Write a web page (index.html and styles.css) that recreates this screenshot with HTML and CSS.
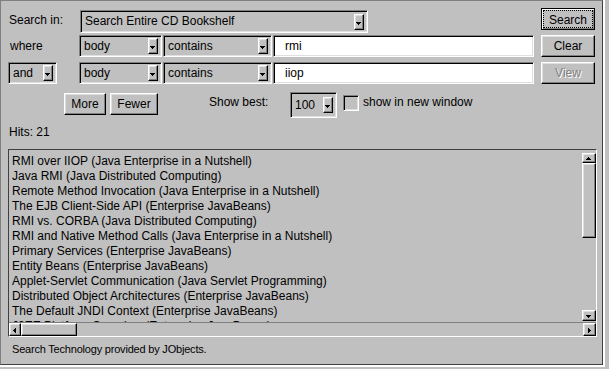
FILE: index.html
```html
<!DOCTYPE html>
<html lang="en">
<head>
  <meta charset="UTF-8">
  <meta name="viewport" content="width=device-width, initial-scale=1.0">
  <link rel="stylesheet" href="styles.css">
  <title>CD Bookshelf Search</title>
</head>
<body>

  <div class="applet">
    <div class="panel">

      <div class="row row-scope">
        <span class="lbl lbl-search">Search in:</span>
        <div class="choice choice-scope"><span class="choice-text">Search Entire CD Bookshelf</span><i class="drop"></i></div>
        <span class="spacer"></span>
        <button class="btn btn-default"><span class="focus">Search</span></button>
      </div>

      <div class="row row-where">
        <span class="lbl lbl-where">where</span>
        <div class="choice choice-field"><span class="choice-text">body</span><i class="drop"></i></div>
        <div class="choice choice-op"><span class="choice-text">contains</span><i class="drop"></i></div>
        <input class="field" type="text" value="rmi">
        <span class="spacer"></span>
        <button class="btn">Clear</button>
      </div>

      <div class="row row-and">
        <div class="choice choice-join"><span class="choice-text">and</span><i class="drop"></i></div>
        <div class="choice choice-field"><span class="choice-text">body</span><i class="drop"></i></div>
        <div class="choice choice-op"><span class="choice-text">contains</span><i class="drop"></i></div>
        <input class="field" type="text" value="iiop">
        <span class="spacer"></span>
        <button class="btn btn-off" disabled>View</button>
      </div>

      <div class="row row-more">
        <button class="btn btn-more">More</button>
        <button class="btn btn-fewer">Fewer</button>
        <span class="lbl lbl-best">Show best:</span>
        <div class="choice choice-best"><span class="choice-text">100</span><i class="drop"></i></div>
        <span class="check"></span>
        <span class="lbl lbl-window">show in new window</span>
      </div>

      <p class="hits">Hits: 21</p>

      <div class="results">
        <div class="results-top">
          <ul class="results-list">
            <li>RMI over IIOP (Java Enterprise in a Nutshell)</li>
            <li>Java RMI (Java Distributed Computing)</li>
            <li>Remote Method Invocation (Java Enterprise in a Nutshell)</li>
            <li>The EJB Client-Side API (Enterprise JavaBeans)</li>
            <li>RMI vs. CORBA (Java Distributed Computing)</li>
            <li>RMI and Native Method Calls (Java Enterprise in a Nutshell)</li>
            <li>Primary Services (Enterprise JavaBeans)</li>
            <li>Entity Beans (Enterprise JavaBeans)</li>
            <li>Applet-Servlet Communication (Java Servlet Programming)</li>
            <li>Distributed Object Architectures (Enterprise JavaBeans)</li>
            <li>The Default JNDI Context (Enterprise JavaBeans)</li>
            <li>J2EE Platform Overview (Enterprise JavaBeans)</li>
          </ul>
          <div class="vbar">
            <span class="sb-btn sb-up"></span>
            <span class="sb-thumb vthumb"></span>
            <span class="sb-track"></span>
            <span class="sb-btn sb-down"></span>
          </div>
        </div>
        <div class="hbar">
          <span class="sb-btn sb-left"></span>
          <span class="sb-thumb hthumb"></span>
          <span class="sb-track"></span>
          <span class="sb-btn sb-right"></span>
        </div>
      </div>

      <p class="credit">Search Technology provided by JObjects.</p>

    </div>
  </div>

</body>
</html>
```
FILE: styles.css
```css
*{
  margin: 0;
  padding: 0;
  box-sizing: border-box;
}
body{
  background: #c0c0c0;
  font-family: "Liberation Sans", Arial, sans-serif;
  font-size: 12px;
  color: #000;
}
.applet{
  width: 605px;
  height: 367px;
  border-right: 2px solid #fff;
  border-bottom: 2px solid #fff;
}
.panel{
  width: 603px;
  height: 365px;
  border: 1px solid;
  border-color: #808080 #404040 #404040 #808080;
}

/* form rows */
.row{
  display: flex;
  align-items: flex-start;
  padding: 0 7px;
}
.row-scope{
  margin-top: 7px;
  height: 26px;
}
.row-where{
  margin-top: 1px;
  height: 22px;
}
.row-and{
  margin-top: 5px;
  height: 22px;
}
.row-more{
  margin-top: 8px;
  height: 26px;
}
.spacer{
  flex: 1;
}
.lbl{
  line-height: 15px;
  white-space: nowrap;
}
.lbl-search{
  width: 72px;
  padding-left: 1px;
  margin-top: 5px;
}
.lbl-where{
  width: 71px;
  padding-left: 2px;
  margin-top: 4px;
}
.lbl-best{
  width: 81px;
  margin-left: 51px;
  margin-top: 3px;
}
.lbl-window{
  margin-left: 4px;
  margin-top: 3px;
}

/* sunken and raised bevels */
.choice, .field, .check{
  border: 1px solid;
  border-color: #808080 #fff #fff #808080;
  box-shadow: inset 1px 1px 0 #000, inset -1px -1px 0 #dfdfdf;
}
.btn, .drop, .sb-btn, .sb-thumb{
  border: 1px solid;
  border-color: #fff #000 #000 #fff;
  box-shadow: inset -1px -1px 0 #808080, inset 1px 1px 0 #dfdfdf;
  background: #c0c0c0;
}

/* choice boxes */
.choice{
  display: flex;
  align-items: center;
  height: 22px;
  padding: 2px 3px 2px 4px;
  background: #c0c0c0;
}
.choice-text{
  flex: 1;
  line-height: 15px;
  white-space: nowrap;
}
.choice-scope{
  width: 288px;
  height: 23px;
  margin-top: 2px;
}
.choice-field{
  width: 83px;
}
.choice-op{
  width: 109px;
  margin-left: 1px;
}
.choice-join{
  width: 49px;
  margin-right: 22px;
}
.choice-best{
  width: 47px;
  height: 26px;
}
.drop{
  display: block;
  position: relative;
  width: 10px;
  height: 16px;
}
.drop::after, .sb-btn::after{
  content: "";
  position: absolute;
  width: 5px;
  height: 3px;
  left: 50%;
  top: 50%;
  margin: -1px 0 0 -3px;
  background:
    linear-gradient(#000, #000) 0 0 / 5px 1px no-repeat,
    linear-gradient(#000, #000) 1px 1px / 3px 1px no-repeat,
    linear-gradient(#000, #000) 2px 2px / 1px 1px no-repeat;
}
.drop::after{
  margin-top: 0;
}

/* text fields */
.field{
  width: 261px;
  height: 22px;
  margin-left: 1px;
  padding: 0 0 0 11px;
  background: #fff;
  font: inherit;
  color: #000;
  outline: none;
}

/* buttons */
.btn{
  width: 54px;
  height: 22px;
  font: inherit;
  color: #000;
  line-height: 15px;
}
.btn-default{
  position: relative;
  border-color: #000;
  box-shadow: inset 1px 1px 0 #fff, inset -1px -1px 0 #808080;
}
.btn-default .focus{
  position: absolute;
  inset: 1px;
  border: 1px dotted #000;
  padding-top: 2px;
}
.btn-off{
  color: #808080;
  text-shadow: 1px 1px 0 #fff;
}
.btn-more{
  width: 42px;
  margin-left: 56px;
  margin-top: 1px;
}
.btn-fewer{
  width: 48px;
  margin-left: 4px;
  margin-top: 1px;
}
.check{
  width: 16px;
  height: 16px;
  margin-left: 6px;
  margin-top: 3px;
}

.hits{
  margin-top: 7px;
  padding-left: 8px;
  line-height: 15px;
}

/* result list */
.results{
  display: flex;
  flex-direction: column;
  width: 589px;
  height: 188px;
  margin: 9px 0 0 7px;
  border: 1px solid;
  border-color: #404040 #fff #fff #404040;
}
.results-top{
  display: flex;
  height: 172px;
}
.results-list{
  flex: 1;
  list-style: none;
  overflow: hidden;
  padding: 4px 0 0 3px;
  line-height: 15px;
  white-space: nowrap;
}
.vbar{
  display: flex;
  flex-direction: column;
  width: 14px;
  padding: 3px 0 1px;
}
.sb-btn{
  position: relative;
  display: block;
}
.sb-up{
  height: 10px;
}
.sb-down{
  height: 11px;
}
.sb-up::after{
  transform: rotate(180deg);
}
.vthumb{
  height: 75px;
}
.sb-track{
  flex: 1;
}
.hbar{
  display: flex;
  height: 14px;
  border-top: 1px solid #808080;
}
.sb-left, .sb-right{
  width: 12px;
}
.sb-right{
  width: 13px;
}
.sb-left::after{
  transform: rotate(90deg);
}
.sb-right::after{
  transform: rotate(-90deg);
}
.hthumb{
  width: 56px;
}

.credit{
  margin-top: 5px;
  padding-left: 11px;
  font-size: 11px;
  line-height: 14px;
  letter-spacing: -0.2px;
}
```
